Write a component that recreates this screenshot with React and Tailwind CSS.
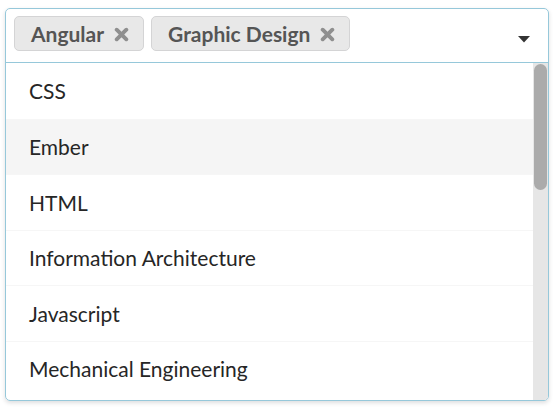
import React from "react";

const selected = ["Angular", "Graphic Design"];
const options = [
  "CSS",
  "Ember",
  "HTML",
  "Information Architecture",
  "Javascript",
  "Mechanical Engineering",
];

const DeleteIcon = () => (
  <svg width="15" height="15" viewBox="0 0 14 14" className="ml-[10px] mt-[1px]">
    <path
      d="M2.5 2.5 L11.5 11.5 M11.5 2.5 L2.5 11.5"
      stroke="#8f8f8f"
      strokeWidth="3.6"
      strokeLinecap="round"
    />
  </svg>
);

const Tag = ({ label }) => (
  <div className="flex items-center h-[35px] pl-[16px] pr-[14px] bg-[#e8e8e8] border border-[#d4d4d5] rounded-[5px] text-[21px] font-bold text-[#555555] leading-none">
    {label}
    <DeleteIcon />
  </div>
);

export default function App() {
  return (
    <div className="w-[556px] h-[409px] bg-white pt-[8px] pl-[5px]" style={{ fontFamily: "Lato, 'Open Sans', sans-serif" }}>
      <div className="w-[544px] h-[393px] border-[1.5px] border-[#96c8da] rounded-[5px] shadow-[0_2px_4px_rgba(34,36,38,0.15)] overflow-hidden flex flex-col">
        <div className="h-[54px] flex items-start pt-[7px] pl-[8px] pr-[18px] gap-[7px] border-b-[1.5px] border-[#96c8da] shrink-0">
          {selected.map((s) => (
            <Tag key={s} label={s} />
          ))}
          <div className="flex-1" />
          <svg width="12" height="7" viewBox="0 0 12 7" className="mt-[20px]">
            <path d="M0 0 L12 0 L6 6.5 Z" fill="#333333" />
          </svg>
        </div>
        <div className="flex flex-1 min-h-0">
          <div className="flex-1 flex flex-col">
            {options.map((o, i) => (
              <div
                key={o}
                className={`h-[55.5px] shrink-0 flex items-center pl-[23px] text-[21px] text-[#262626] ${
                  i > 0 ? "border-t border-[#f6f6f6]" : ""
                } ${o === "Ember" ? "bg-[#f5f5f5]" : ""}`}
              >
                {o}
              </div>
            ))}
          </div>
          <div className="w-[15px] bg-[#e6e6e6] flex flex-col items-center pt-[1px]">
            <div className="w-[13px] h-[126px] bg-[#ababab] rounded-full" />
          </div>
        </div>
      </div>
    </div>
  );
}
